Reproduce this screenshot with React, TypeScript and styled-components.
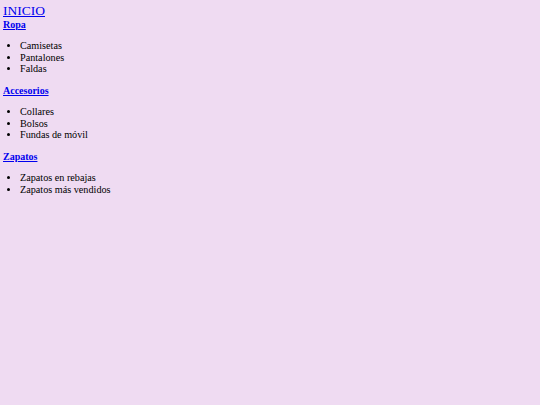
import React from "react";
import styled, { createGlobalStyle } from "styled-components";

const GlobalStyle = createGlobalStyle`
  html, body {
    background: #efdbf2;
  }
  body {
    margin: 3px;
    font-family: "Liberation Serif", "Times New Roman", serif;
    font-size: 10px;
    line-height: 11.5px;
    color: #000;
  }
`;

const sections = [
  { title: "Ropa", items: ["Camisetas", "Pantalones", "Faldas"] },
  { title: "Accesorios", items: ["Collares", "Bolsos", "Fundas de móvil"] },
  { title: "Zapatos", items: ["Zapatos en rebajas", "Zapatos más vendidos"] },
];

const Nav = styled.nav`
  display: block;
`;

const HomeLink = styled.a`
  display: block;
  font-size: 13.5px;
  line-height: 15.5px;
  color: #0000ee;
  text-decoration: underline;
`;

const SectionTitle = styled.h3`
  margin: 0;
  font-size: 10px;
  font-weight: bold;
`;

const TitleLink = styled.a`
  color: #0000ee;
  text-decoration: underline;
`;

const List = styled.ul`
  margin: 10px 0;
  padding-left: 17px;
  list-style: disc;
`;

const Item = styled.li`
  font-size: 10.2px;
`;

const App = () => {
  return (
    <>
      <GlobalStyle />
      <Nav>
        <HomeLink href="#">INICIO</HomeLink>
        {sections.map((section) => (
          <section key={section.title}>
            <SectionTitle>
              <TitleLink href="#">{section.title}</TitleLink>
            </SectionTitle>
            <List>
              {section.items.map((item) => (
                <Item key={item}>{item}</Item>
              ))}
            </List>
          </section>
        ))}
      </Nav>
    </>
  );
};

export default App;
